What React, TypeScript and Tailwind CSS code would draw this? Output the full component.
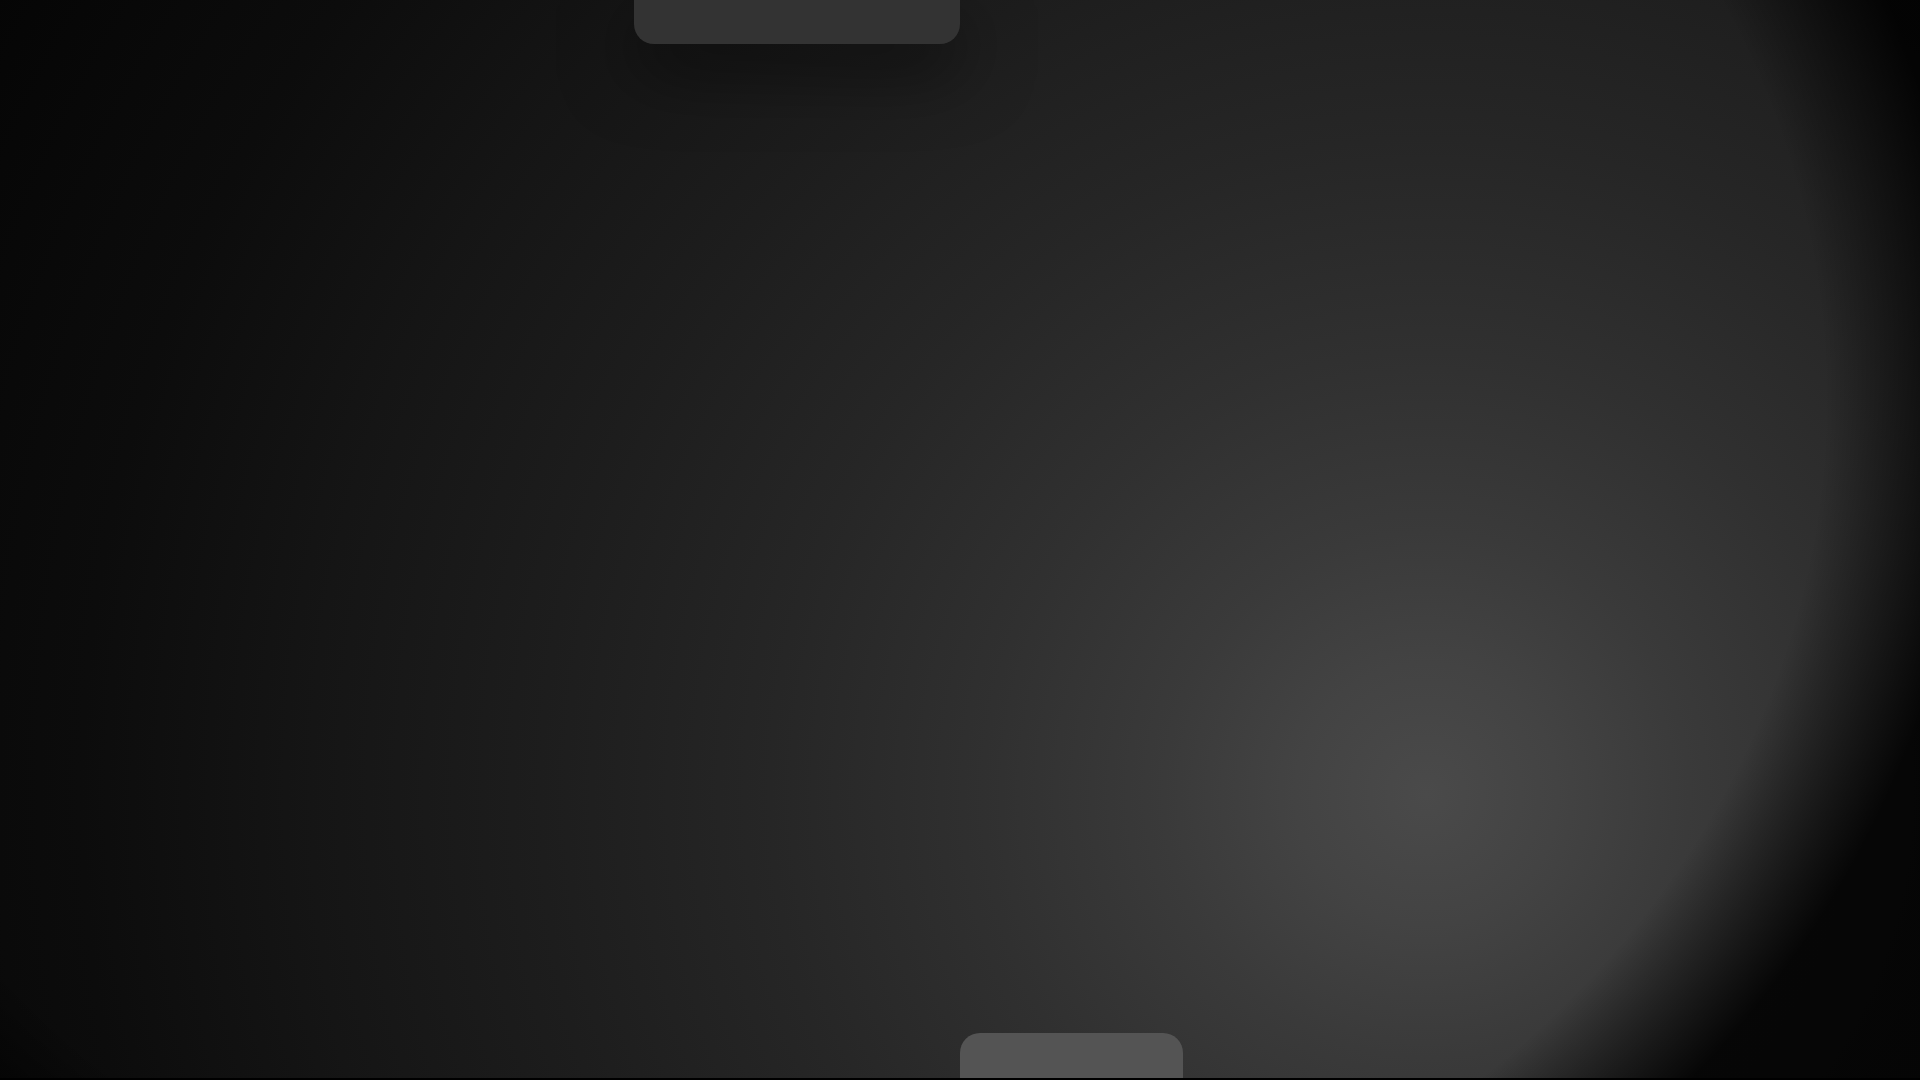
import React from "react";

export default function App() {
  return (
    <div className="relative h-[1080px] w-[1920px] overflow-hidden bg-black font-['Liberation_Sans',sans-serif]">
      <div className="flex h-[1078px] w-full flex-col justify-between bg-[radial-gradient(circle_1640px_at_74.3%_73.7%,#4a4a4a_0%,#434343_8%,#3a3a3a_16%,#303030_27%,#262626_40%,#1d1d1d_54%,#151515_68%,#0c0c0c_82%,#050505_100%)]">
        <div className="pointer-events-none absolute inset-0 bg-[radial-gradient(ellipse_1165px_1030px_at_800px_400px,rgba(0,0,0,0)_88%,rgba(0,0,0,0.88)_101%)]" />
        <div className="relative ml-[634px] h-[44px] w-[326px] rounded-b-[20px] bg-[#333333] shadow-[0_24px_70px_rgba(0,0,0,0.55)]" />
        <div className="relative ml-[960px] h-[45px] w-[223px] rounded-t-[20px] bg-[#545454]" />
      </div>
    </div>
  );
}
